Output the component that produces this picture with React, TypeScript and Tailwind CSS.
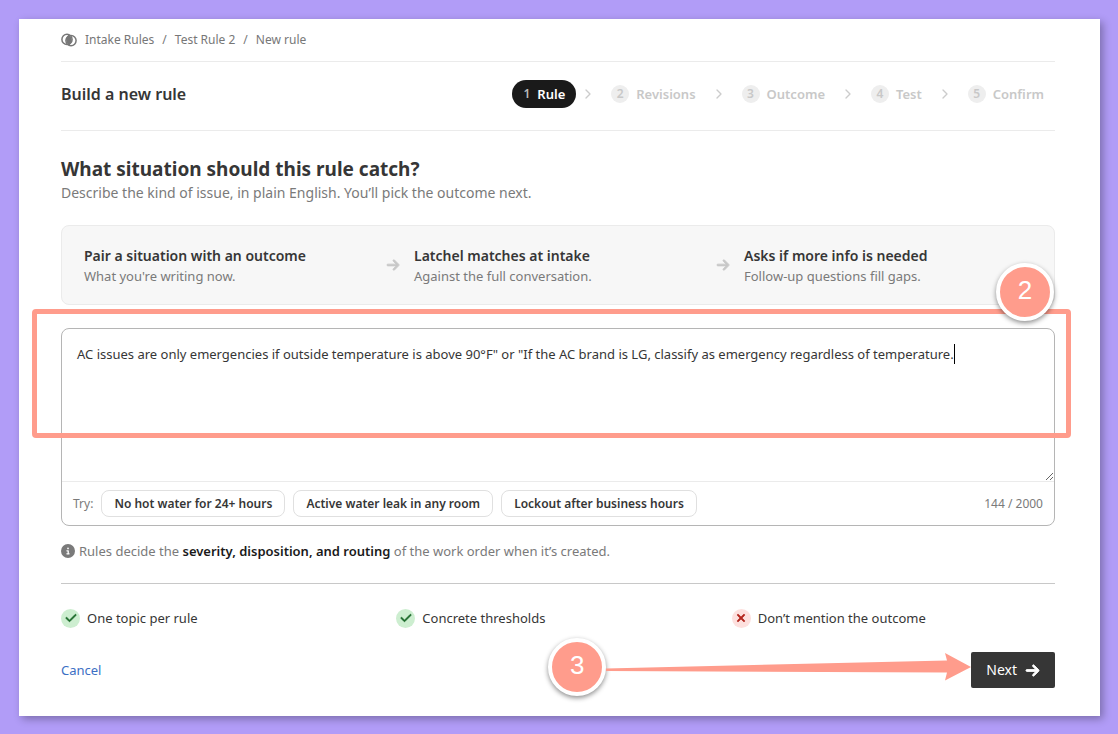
import { FaArrowRight, FaCheck, FaCircleInfo, FaXmark } from "react-icons/fa6"
import { ChevronRight } from "lucide-react"

const crumbs = ["Intake Rules", "Test Rule 2", "New rule"]

const steps = ["Rule", "Revisions", "Outcome", "Test", "Confirm"]

const flow = [
  { title: "Pair a situation with an outcome", text: "What you're writing now." },
  { title: "Latchel matches at intake", text: "Against the full conversation." },
  { title: "Asks if more info is needed", text: "Follow-up questions fill gaps." },
]

const examples = ["No hot water for 24+ hours", "Active water leak in any room", "Lockout after business hours"]

const tips = [
  { text: "One topic per rule", ok: true },
  { text: "Concrete thresholds", ok: true },
  { text: "Don’t mention the outcome", ok: false },
]

const ruleText =
  'AC issues are only emergencies if outside temperature is above 90°F" or "If the AC brand is LG, classify as emergency regardless of temperature.'

function RulesIcon() {
  return (
    <svg viewBox="0 0 16 14" className="h-[14px] w-4" fill="none" stroke="#777777" strokeWidth="1.5">
      <circle cx="6" cy="6.4" r="5.1" />
      <circle cx="10" cy="7.6" r="5.1" />
      <path d="M7.6 3.1A5.1 5.1 0 0 1 8.4 10.9A5.1 5.1 0 0 1 7.6 3.1Z" fill="#777777" strokeWidth="2" />
    </svg>
  )
}

function Marker({ label }: { label: string }) {
  return (
    <span className="flex size-[58px] items-center justify-center rounded-full border-4 border-white bg-[#ff9c8c] pb-1 font-['Liberation_Sans',sans-serif] text-[26px] text-white shadow-[0_2px_5px_rgba(0,0,0,0.45)]">
      {label}
    </span>
  )
}

export default function App() {
  return (
    <div className="min-h-screen bg-[#b19cf7] pt-[19px] pr-[18px] pb-[18px] pl-[19px] font-['Noto_Sans',sans-serif] text-[13px] leading-5 text-[#363636]">
      <main className="bg-white pr-[45px] pb-7 pl-[42px] shadow-[3px_3px_8px_rgba(0,0,0,0.3)]">
        <nav className="flex h-[43px] items-center gap-2 border-b border-[#ebebeb] text-xs text-[#777777]">
          <RulesIcon />
          {crumbs.map((crumb, i) => (
            <span key={crumb} className="flex gap-2">
              {i > 0 && <span>/</span>}
              <a href="#">{crumb}</a>
            </span>
          ))}
        </nav>

        <header className="flex h-[69px] items-center justify-between border-b border-[#ebebeb] pb-1">
          <h1 className="text-base font-semibold">Build a new rule</h1>
          <ol className="flex items-center text-[13px] font-semibold">
            {steps.map((step, i) => (
              <li key={step} className="flex items-center">
                {i > 0 && <ChevronRight className="mx-1 size-4 text-[#cccccc]" />}
                {i === 0 ? (
                  <button className="flex h-7 items-center gap-[7px] rounded-full bg-[#1a1a1a] px-[11px] text-white">
                    <span className="text-xs text-[#bbbbbb]">1</span>
                    {step}
                  </button>
                ) : (
                  <button className="flex h-7 items-center gap-[7px] px-[11px] text-[#c8c8c8]">
                    <span className="flex size-[18px] items-center justify-center rounded-full bg-[#eeeeee] text-xs">
                      {i + 1}
                    </span>
                    {step}
                  </button>
                )}
              </li>
            ))}
          </ol>
        </header>

        <h2 className="mt-[25px] text-[19px] leading-[26px] font-bold">What situation should this rule catch?</h2>
        <p className="text-sm leading-[22px] text-[#7a7a7a]">
          Describe the kind of issue, in plain English. You’ll pick the outcome next.
        </p>

        <section className="mt-[21px] grid h-20 grid-cols-3 items-center gap-[42px] rounded-lg border border-[#ebebeb] bg-[#f7f7f7] px-[22px] pt-[2px]">
          {flow.map((item, i) => (
            <div key={item.title} className="relative">
              {i > 0 && (
                <FaArrowRight
                  strokeWidth={30}
                  className="absolute top-3 right-full mr-[14px] size-[14px] stroke-current text-[#c8c8c8]"
                />
              )}
              <h3 className="text-sm leading-5 font-semibold">{item.title}</h3>
              <p className="text-[#7a7a7a]">{item.text}</p>
            </div>
          ))}
        </section>

        <section className="relative mt-[23px] rounded-lg border border-[#b5b5b5]">
          <div className="relative">
            <textarea
              aria-label="Rule description"
              defaultValue={ruleText}
              className="block h-[152px] w-full resize-y rounded-t-lg px-[15px] py-[15px] outline-none"
            />
            <span className="absolute top-[15px] left-[892px] h-5 w-px bg-black" />
          </div>
          <div className="flex h-11 items-center gap-2 border-t border-[#ebebeb] px-[11px] text-xs">
            <span className="text-[#7a7a7a]">Try:</span>
            {examples.map((example) => (
              <button key={example} className="h-[27px] rounded-lg border border-[#e0e0e0] px-3 font-semibold">
                {example}
              </button>
            ))}
            <span className="ml-auto text-[#7a7a7a]">144 / 2000</span>
          </div>
          <div className="pointer-events-none absolute -top-5 -right-[17px] -left-[30px] h-[129px] rounded-sm border-[5px] border-[#ff9c8c]" />
          <div className="absolute -top-[66px] right-0">
            <Marker label="2" />
          </div>
        </section>

        <p className="mt-[15px] flex items-center gap-1 text-[#7a7a7a]">
          <FaCircleInfo className="size-[14px]" />
          <span>
            Rules decide the <strong className="font-semibold text-[#1a1a1a]">severity, disposition, and routing</strong>{" "}
            of the work order when it’s created.
          </span>
        </p>

        <ul className="mt-[22px] grid grid-cols-3 gap-3 border-t border-[#c8c8c8] pt-6">
          {tips.map((tip) => (
            <li key={tip.text} className="flex items-center gap-[7px]">
              {tip.ok ? (
                <span className="flex size-[19px] items-center justify-center rounded-full bg-[#cdeed0] text-[#1d6b2c]">
                  <FaCheck strokeWidth={20} className="size-3 stroke-current" />
                </span>
              ) : (
                <span className="flex size-[19px] items-center justify-center rounded-full bg-[#fde0de] text-[#b3261e]">
                  <FaXmark strokeWidth={30} className="size-3 stroke-current" />
                </span>
              )}
              {tip.text}
            </li>
          ))}
        </ul>

        <footer className="mt-6 flex h-9 items-center justify-between">
          <a href="#" className="text-[#3b6fc4]">
            Cancel
          </a>
          <div className="relative">
            <button className="flex h-9 items-center gap-2 rounded-xs bg-[#363636] px-[15px] text-sm text-white">
              Next
              <FaArrowRight strokeWidth={30} className="size-[15px] stroke-current" />
            </button>
            <div className="absolute -top-[14px] right-full flex items-center">
              <Marker label="3" />
              <svg viewBox="0 0 365 30" className="h-[30px] w-[365px]" fill="#ff9c8c">
                <path d="M0 16.5 L341 8.5 L339 1 L365 15 L339 28.5 L341 20.5 L0 19 Z" />
              </svg>
            </div>
          </div>
        </footer>
      </main>
    </div>
  )
}
